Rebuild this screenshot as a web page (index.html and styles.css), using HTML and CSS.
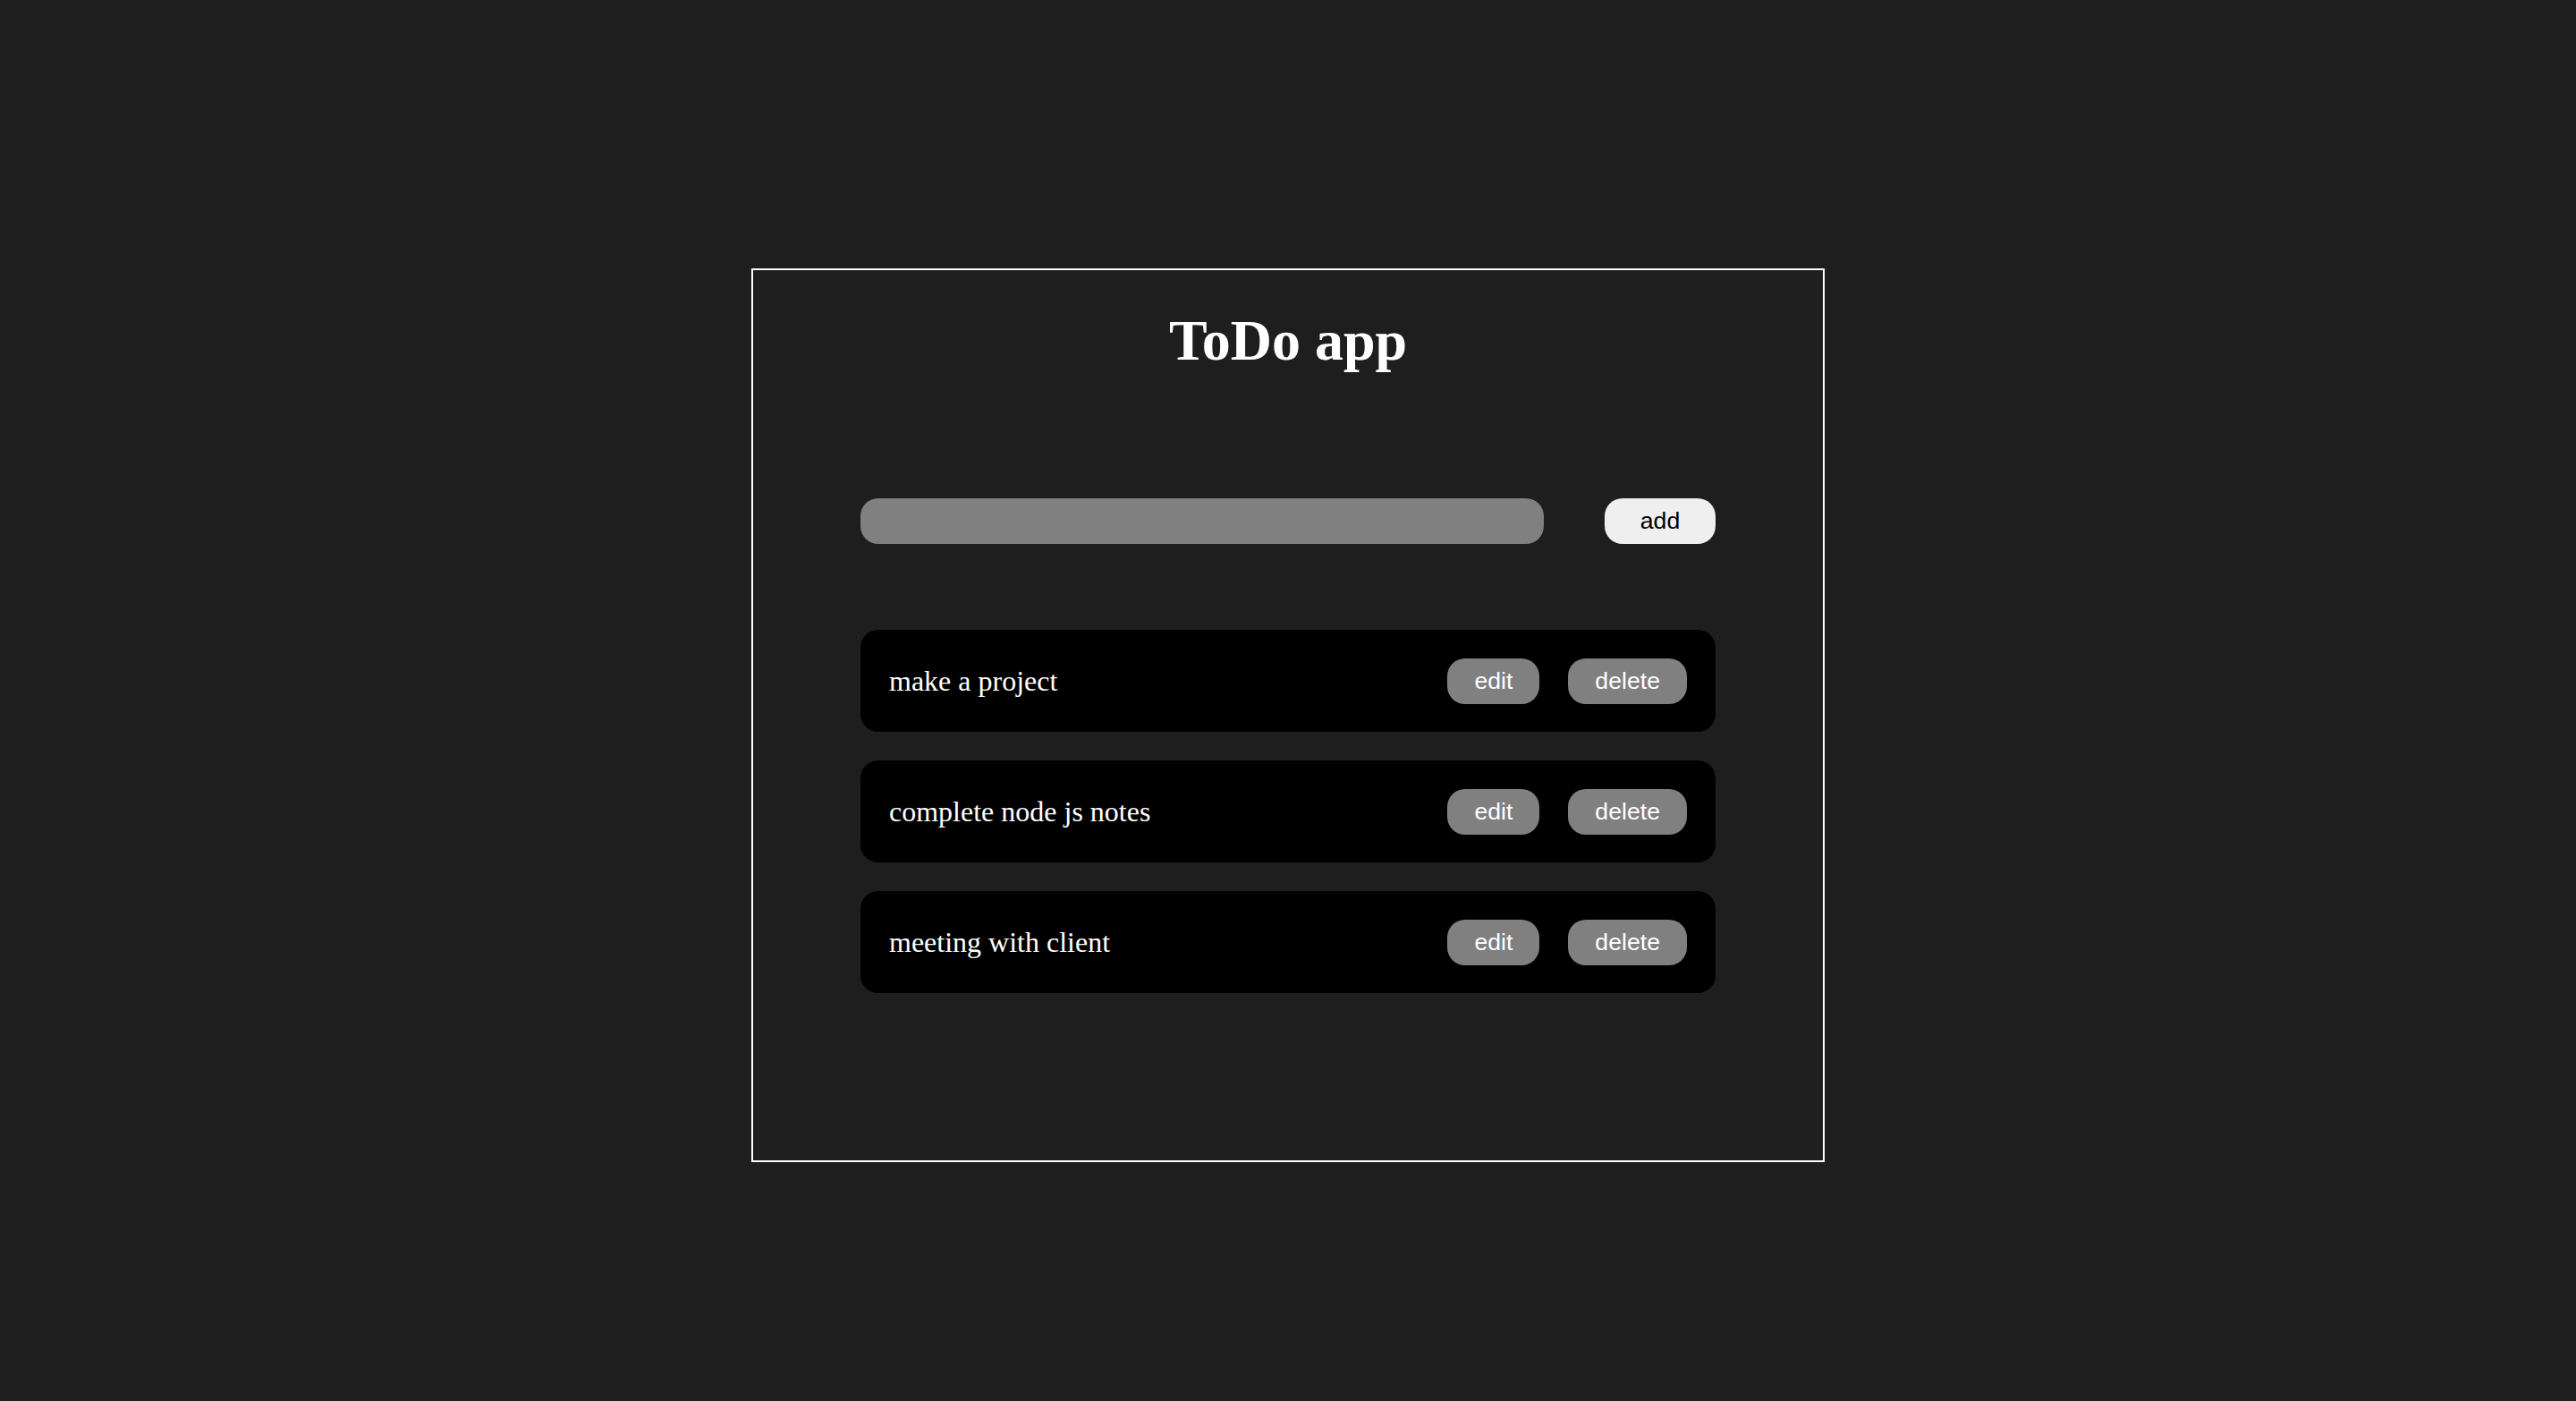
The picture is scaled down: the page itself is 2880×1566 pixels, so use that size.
FILE: index.html
```html
<!DOCTYPE html>
<html lang="en">
<head>
    <meta charset="UTF-8">
    <meta name="viewport" content="width=device-width, initial-scale=1.0">
    <title>ToDo app</title>
    <link rel="stylesheet" href="styles.css">
</head>
<body>
    <!-- main box -->
    <div class="container">
        <h1 class="title">ToDo app</h1>
        <!-- input part -->
        <div class="form">
            <input type="text" class="task-input">
            <button class="add-btn">add</button>
        </div>
        <!-- task list -->
        <ul class="list">
            <li class="item">
                <span class="text">make a project</span>
                <div class="actions">
                    <button class="btn">edit</button>
                    <button class="btn">delete</button>
                </div>
            </li>
            <li class="item">
                <span class="text">complete node js notes</span>
                <div class="actions">
                    <button class="btn">edit</button>
                    <button class="btn">delete</button>
                </div>
            </li>
            <li class="item">
                <span class="text">meeting with client</span>
                <div class="actions">
                    <button class="btn">edit</button>
                    <button class="btn">delete</button>
                </div>
            </li>
        </ul>
    </div>
</body>
</html>
```

FILE: styles.css
```css
*{
    margin: 0;
    padding: 0;
    box-sizing: border-box;
    list-style: none;
}
body{
    background-color: #1f1e1f;
    color: #fff;
    font-family: "Liberation Serif", "Times New Roman", serif;
    padding-top: 300px;
}
.container{
    width: 1200px;
    height: 999px;
    margin: 0 auto;
    border: 2px solid #fff;
}
.title{
    font-size: 64px;
    line-height: 71px;
    font-weight: bold;
    text-align: center;
    margin-top: 43px;
}
.form{
    width: 956px;
    margin: 141px auto 0;
    display: flex;
    justify-content: space-between;
}
.task-input{
    width: 764px;
    height: 51px;
    border: none;
    border-radius: 20px;
    background-color: #808080;
    outline: none;
}
.add-btn{
    width: 124px;
    height: 51px;
    border: none;
    border-radius: 20px;
    background-color: #efefef;
    color: #000;
    font-family: "Liberation Sans", Arial, sans-serif;
    font-size: 26.67px;
}
.list{
    width: 956px;
    margin: 96px auto 0;
    display: flex;
    flex-direction: column;
    gap: 32px;
}
.item{
    height: 114px;
    padding: 0 32px;
    background-color: #000;
    border-radius: 20px;
    display: flex;
    align-items: center;
}
.text{
    font-size: 32px;
}
.actions{
    margin-left: auto;
    display: flex;
    gap: 32px;
}
.btn{
    height: 51px;
    padding: 0 30px;
    border: none;
    border-radius: 20px;
    background-color: #808080;
    color: #fff;
    font-family: "Liberation Sans", Arial, sans-serif;
    font-size: 26.67px;
}
```
